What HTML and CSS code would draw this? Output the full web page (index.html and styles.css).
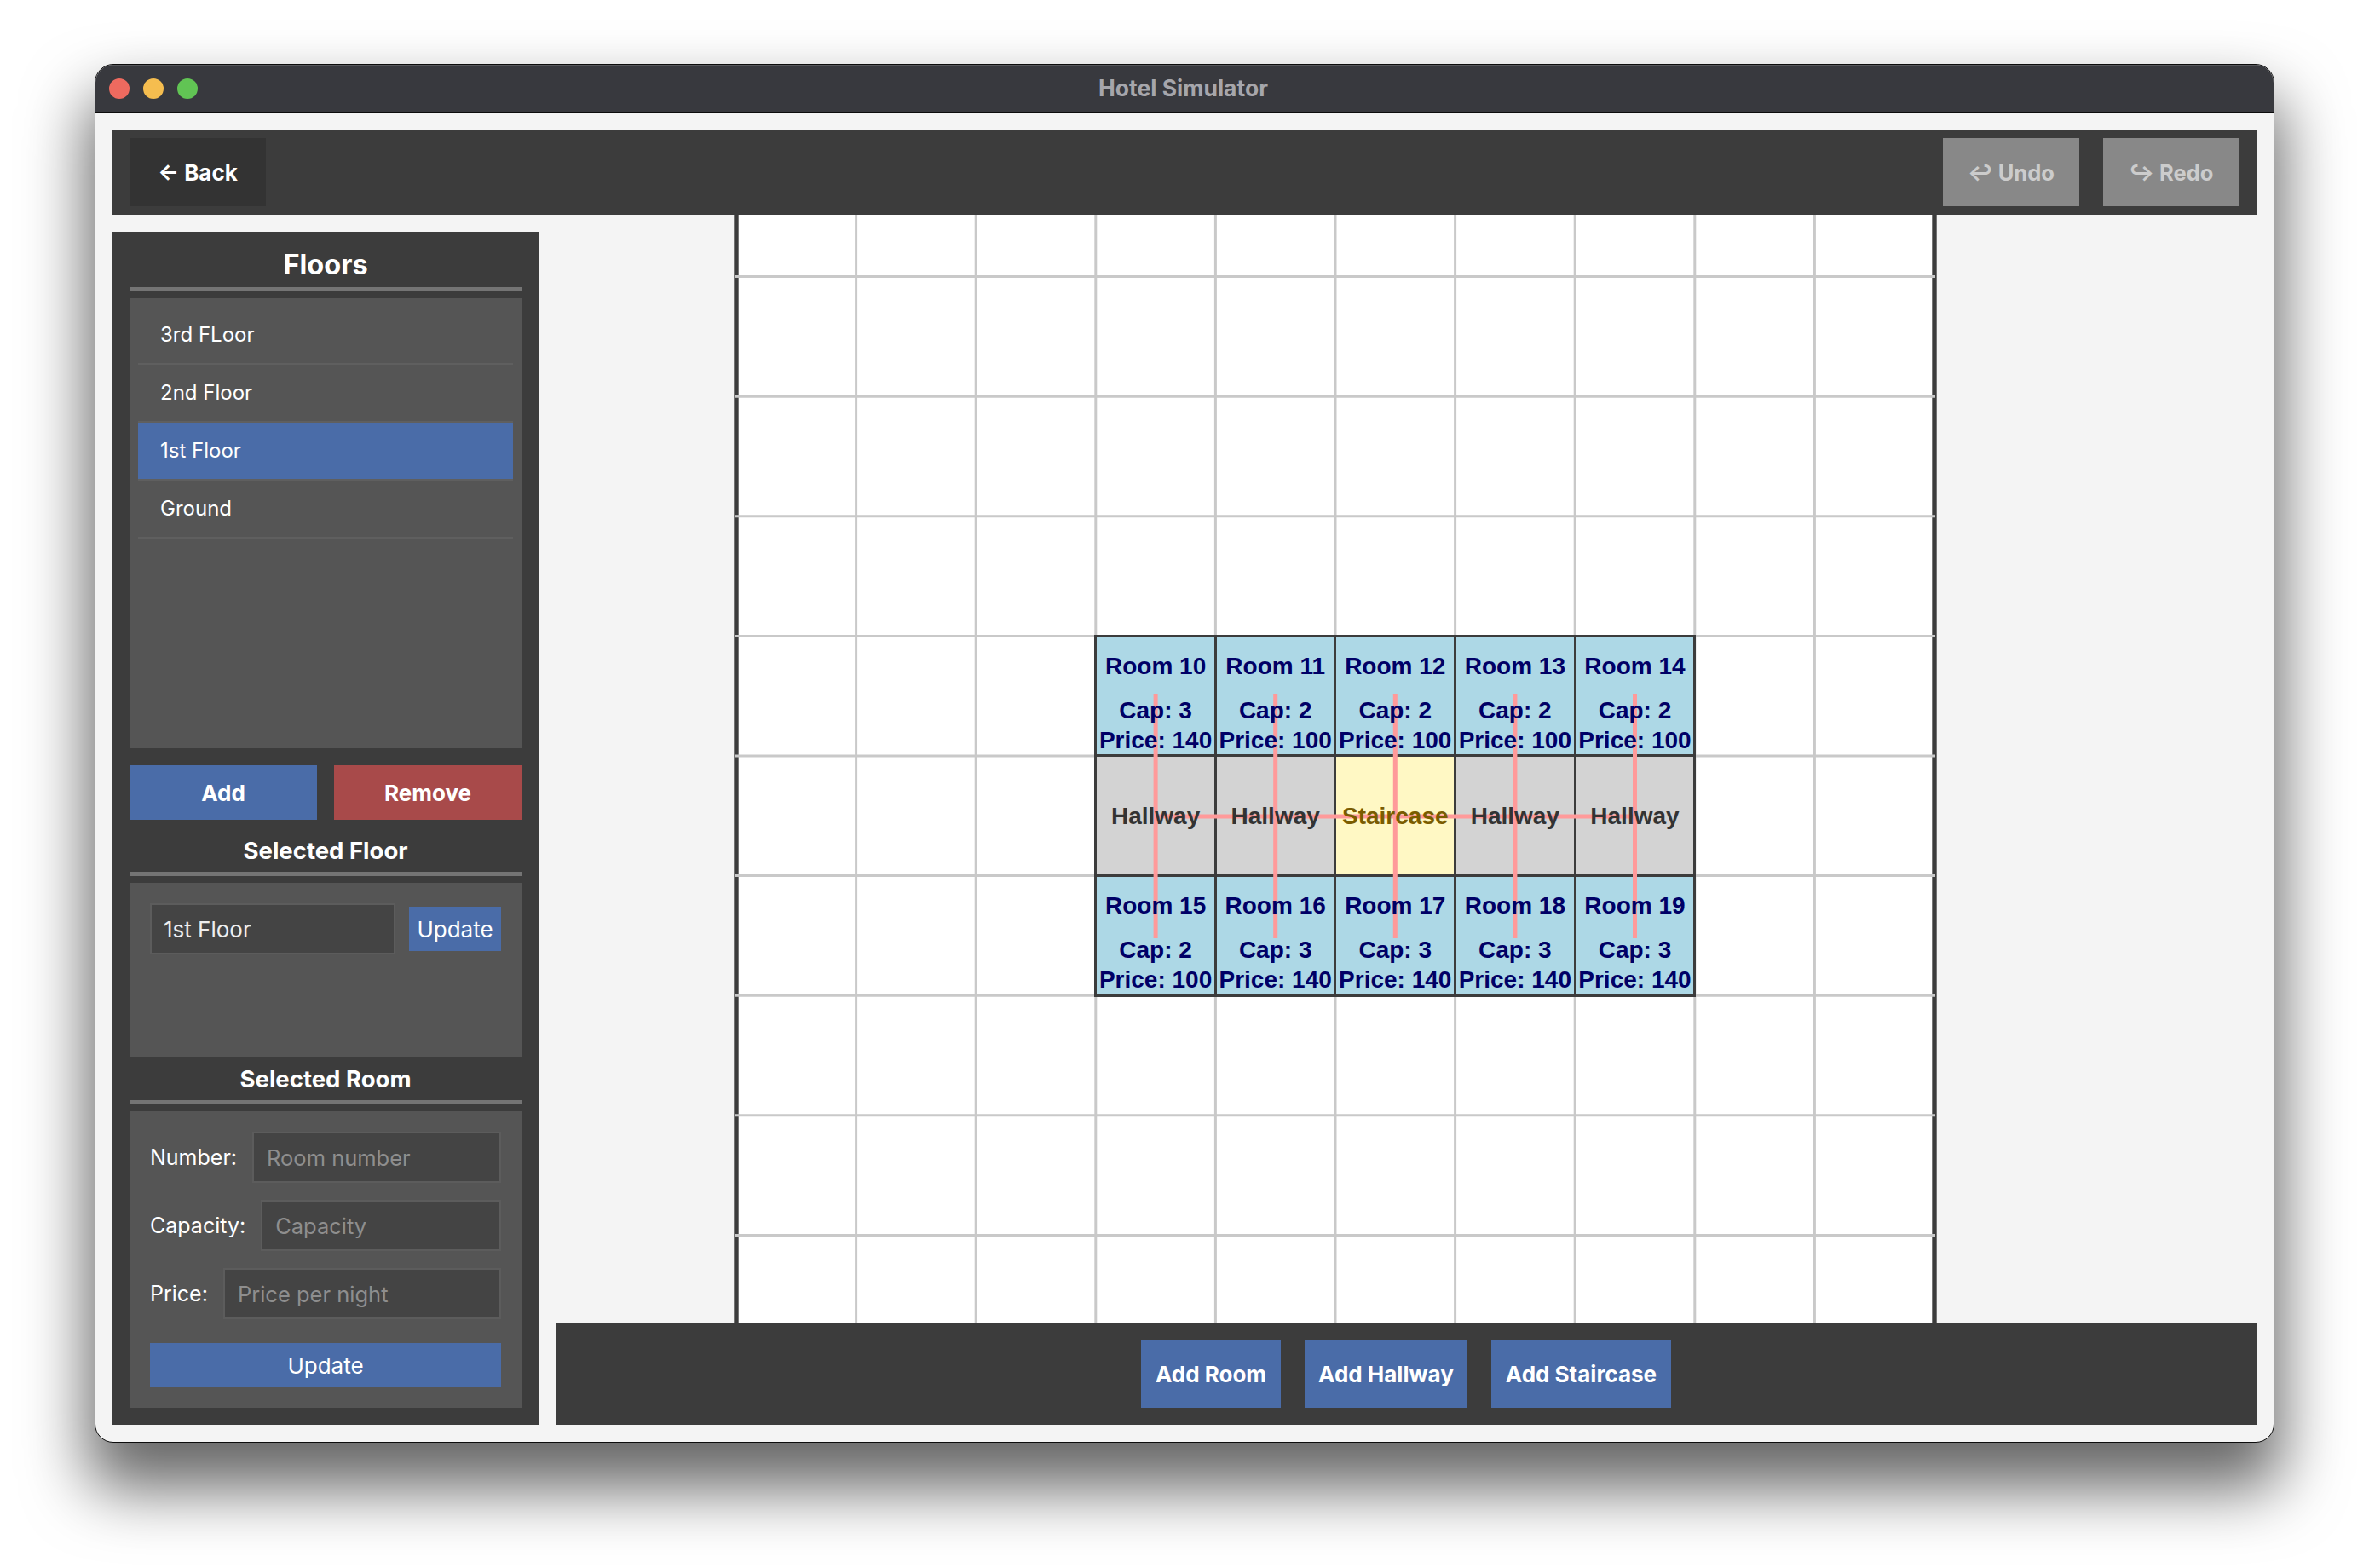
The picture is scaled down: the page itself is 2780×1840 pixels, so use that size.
FILE: index.html
```html
<!DOCTYPE html>
<html lang="en">
<head>
<meta charset="UTF-8">
<meta name="viewport" content="width=device-width, initial-scale=1.0">
<title>Hotel Simulator</title>
<link rel="stylesheet" href="styles.css">
</head>
<body>
<div class="window">
    <div class="titlebar">
        <div class="lights">
            <span class="light red"></span>
            <span class="light yellow"></span>
            <span class="light green"></span>
        </div>
        <div class="title">Hotel Simulator</div>
    </div>

    <div class="main">
        <div class="toolbar">
            <button class="btn btn-back">← Back</button>
            <div class="toolbar-right">
                <button class="btn btn-disabled">↩ Undo</button>
                <button class="btn btn-disabled">↪ Redo</button>
            </div>
        </div>

        <div class="workspace">
            <div class="sidebar">
                <h2 class="heading heading-floors">Floors</h2>
                <ul class="floor-list">
                    <li>3rd FLoor</li>
                    <li>2nd Floor</li>
                    <li class="selected">1st Floor</li>
                    <li>Ground</li>
                </ul>
                <div class="floor-actions">
                    <button class="btn-action blue">Add</button>
                    <button class="btn-action red-btn">Remove</button>
                </div>

                <h3 class="heading">Selected Floor</h3>
                <div class="panel panel-floor">
                    <input class="field" type="text" value="1st Floor">
                    <button class="btn-small">Update</button>
                </div>

                <h3 class="heading">Selected Room</h3>
                <div class="panel panel-room">
                    <label class="row">Number: <input class="field" type="text" placeholder="Room number"></label>
                    <label class="row">Capacity: <input class="field" type="text" placeholder="Capacity"></label>
                    <label class="row">Price: <input class="field" type="text" placeholder="Price per night"></label>
                    <button class="btn-small btn-wide">Update</button>
                </div>
            </div>

            <div class="center">
                <div class="canvas">
                    <div class="board">
                        <svg class="grid-lines" width="1406" height="1406" viewBox="0 0 1406 1406">
                            <path class="sides" d="M0 0V1406M1406 0V1406"/>
                            <path class="lines" d="M140.6 0V1406M281.2 0V1406M421.8 0V1406M562.4 0V1406M703 0V1406M843.6 0V1406M984.2 0V1406M1124.8 0V1406M1265.4 0V1406"/>
                            <path class="lines" d="M-1 140.6H1407M-1 281.2H1407M-1 421.8H1407M-1 562.4H1407M-1 703H1407M-1 843.6H1407M-1 984.2H1407M-1 1124.8H1407M-1 1265.4H1407"/>
                        </svg>

                        <div class="cell room" style="grid-column: 4; grid-row: 5"><b>Room 10</b><span>Cap: 3</span><span>Price: 140</span></div>
                        <div class="cell room" style="grid-column: 5; grid-row: 5"><b>Room 11</b><span>Cap: 2</span><span>Price: 100</span></div>
                        <div class="cell room" style="grid-column: 6; grid-row: 5"><b>Room 12</b><span>Cap: 2</span><span>Price: 100</span></div>
                        <div class="cell room" style="grid-column: 7; grid-row: 5"><b>Room 13</b><span>Cap: 2</span><span>Price: 100</span></div>
                        <div class="cell room" style="grid-column: 8; grid-row: 5"><b>Room 14</b><span>Cap: 2</span><span>Price: 100</span></div>

                        <div class="cell hallway" style="grid-column: 4; grid-row: 6"><span>Hallway</span></div>
                        <div class="cell hallway" style="grid-column: 5; grid-row: 6"><span>Hallway</span></div>
                        <div class="cell staircase" style="grid-column: 6; grid-row: 6"><span>Staircase</span></div>
                        <div class="cell hallway" style="grid-column: 7; grid-row: 6"><span>Hallway</span></div>
                        <div class="cell hallway" style="grid-column: 8; grid-row: 6"><span>Hallway</span></div>

                        <div class="cell room" style="grid-column: 4; grid-row: 7"><b>Room 15</b><span>Cap: 2</span><span>Price: 100</span></div>
                        <div class="cell room" style="grid-column: 5; grid-row: 7"><b>Room 16</b><span>Cap: 3</span><span>Price: 140</span></div>
                        <div class="cell room" style="grid-column: 6; grid-row: 7"><b>Room 17</b><span>Cap: 3</span><span>Price: 140</span></div>
                        <div class="cell room" style="grid-column: 7; grid-row: 7"><b>Room 18</b><span>Cap: 3</span><span>Price: 140</span></div>
                        <div class="cell room" style="grid-column: 8; grid-row: 7"><b>Room 19</b><span>Cap: 3</span><span>Price: 140</span></div>

                        <svg class="links" width="1406" height="1406" viewBox="0 0 1406 1406">
                            <path d="M492.1 630V917M632.7 630V917M773.3 630V917M913.9 630V917M1054.5 630V917M492.1 774H1054.5"/>
                        </svg>
                    </div>
                </div>
                <div class="bottombar">
                    <button class="btn btn-add">Add Room</button>
                    <button class="btn btn-add">Add Hallway</button>
                    <button class="btn btn-add">Add Staircase</button>
                </div>
            </div>
        </div>
    </div>
</div>
</body>
</html>
```

FILE: styles.css
```css
* {
    box-sizing: border-box;
}

body {
    margin: 0;
    padding: 75px 0 0 111px;
    height: 1840px;
    overflow: hidden;
    background-color: #fff;
    font-family: Inter, "Liberation Sans", sans-serif;
    color: #fff;
}

button {
    font-family: inherit;
    border: none;
    color: #fff;
    padding: 0;
}

.window {
    width: 2558px;
    height: 1618px;
    border: 1px solid #0c0c0c;
    border-radius: 22px;
    background-color: #f4f4f4;
    box-shadow: 0 46px 74px 8px rgba(0, 0, 0, 0.6);
    display: flex;
    flex-direction: column;
    overflow: hidden;
}

/* mac title bar */
.titlebar {
    height: 57px;
    flex: none;
    display: grid;
    grid-template-columns: 1fr auto 1fr;
    align-items: center;
    background-color: #38393e;
    border-bottom: 1px solid #0c0c0c;
    box-shadow: inset 0 2px 0 #56575b;
}

.lights {
    display: flex;
    gap: 16px;
    padding-left: 16px;
}

.light {
    width: 24px;
    height: 24px;
    border-radius: 50%;
}

.light.red { background-color: #ee6a5f; }
.light.yellow { background-color: #f5bd4f; }
.light.green { background-color: #61c454; }

.title {
    font-size: 26.5px;
    font-weight: 700;
    color: #a6a6ab;
    margin: -2px 0 0 -3px;
}

.main {
    flex: 1;
    padding: 19px 20px 20px;
    display: flex;
    flex-direction: column;
    min-height: 0;
}

.toolbar {
    height: 100px;
    flex: none;
    padding: 10px 20px;
    display: flex;
    justify-content: space-between;
    background-color: #3c3c3c;
}

.toolbar-right {
    display: flex;
    gap: 28px;
}

.btn {
    font-size: 26px;
    font-weight: 700;
    height: 80px;
}

.btn-back {
    width: 160px;
    background-color: #333;
}

.btn-disabled {
    width: 160px;
    font-size: 25.5px;
    background-color: #888;
    color: #ccc;
}

.workspace {
    flex: 1;
    display: flex;
    gap: 20px;
    min-height: 0;
}

/* left column */
.sidebar {
    width: 500px;
    flex: none;
    margin-top: 20px;
    padding: 0 20px 20px;
    background-color: #3c3c3c;
    display: flex;
    flex-direction: column;
}

.heading {
    margin: 0 0 8px;
    padding-bottom: 8px;
    line-height: 34px;
    font-size: 27.5px;
    font-weight: 700;
    text-align: center;
    border-bottom: 5px solid #747474;
}

.heading-floors {
    padding: 20px 0 7px;
    line-height: 38px;
    font-size: 32.5px;
}

.floor-list {
    list-style: none;
    margin: 0 0 20px;
    padding: 10px;
    height: 528px;
    background-color: #555;
}

.floor-list li {
    height: 68px;
    padding-left: 26px;
    line-height: 66px;
    font-size: 24px;
    border-bottom: 2px solid #5f5f5f;
}

.floor-list li.selected {
    background-color: #4a6ca8;
}

.floor-actions {
    display: flex;
    gap: 20px;
    margin-bottom: 19px;
}

.btn-action {
    flex: 1;
    height: 64px;
    font-size: 26px;
    font-weight: 700;
}

.blue { background-color: #4a6ca8; }
.red-btn { background-color: #a84a4a; }

.panel {
    background-color: #555;
    padding: 24px;
    margin-bottom: 9px;
}

.panel-floor {
    height: 204px;
    display: flex;
    align-items: flex-start;
    gap: 16px;
}

.panel-floor .field {
    padding: 0 14px;
}

.panel-floor .btn-small {
    width: 108px;
    margin-top: 4px;
}

.panel-room {
    height: 348px;
    margin-bottom: 0;
    display: flex;
    flex-direction: column;
    gap: 20px;
}

.field {
    flex: 1;
    min-width: 0;
    width: 288px;
    height: 60px;
    padding: 0 15px;
    font-family: inherit;
    font-size: 26px;
    color: #eee;
    background-color: #444;
    border: 2px solid #5c5c5c;
    outline: none;
}

.row .field {
    font-size: 25.5px;
}

.field::placeholder {
    color: #8e8e8e;
    opacity: 1;
}

.row {
    display: flex;
    align-items: center;
    gap: 18px;
    font-size: 25px;
    white-space: nowrap;
}

.btn-small {
    height: 52px;
    font-size: 26px;
    background-color: #4a6ca8;
}

.btn-wide {
    margin-top: 8px;
}

/* right column */
.center {
    flex: 1;
    min-width: 0;
    display: flex;
    flex-direction: column;
}

.canvas {
    flex: 1;
    min-height: 0;
    position: relative;
    overflow: hidden;
}

.board {
    position: absolute;
    left: 212px;
    top: -68px;
    z-index: 0;
    width: 1406px;
    height: 1406px;
    background-color: #fff;
    display: grid;
    grid-template-columns: repeat(10, 140.6px);
    grid-template-rows: repeat(10, 140.6px);
}

.grid-lines,
.links {
    position: absolute;
    left: 0;
    top: 0;
    overflow: visible;
    fill: none;
}

.grid-lines {
    z-index: -1;
}

.grid-lines .sides {
    stroke: #3c3c3c;
    stroke-width: 5.4;
}

.grid-lines .lines {
    stroke: #c9c9c9;
    stroke-width: 3;
}

/* lines run above the cell colours but under the labels */
.links {
    z-index: 1;
    stroke: #ff9a9a;
    stroke-width: 5;
}

.cell {
    margin: -1.5px;
    border: 3px solid #3c3c3c;
    display: flex;
    flex-direction: column;
    align-items: center;
    font-family: "Liberation Sans", Arial, sans-serif;
    font-size: 28px;
    font-weight: 700;
    white-space: nowrap;
}

.cell b,
.cell span {
    position: relative;
    z-index: 2;
    line-height: 35px;
}

.room {
    padding-top: 16px;
    background-color: #add8e6;
    color: #000066;
}

.room b {
    margin-bottom: 17px;
}

.hallway,
.staircase {
    justify-content: center;
}

.hallway {
    background-color: #d3d3d3;
    color: #333;
}

.staircase {
    background-color: #fff8c4;
    color: #7a5c00;
}

.bottombar {
    height: 120px;
    flex: none;
    display: flex;
    justify-content: center;
    align-items: center;
    gap: 28px;
    background-color: #3c3c3c;
}

.btn-add {
    padding: 0 16.5px;
    background-color: #4a6ca8;
}
```
